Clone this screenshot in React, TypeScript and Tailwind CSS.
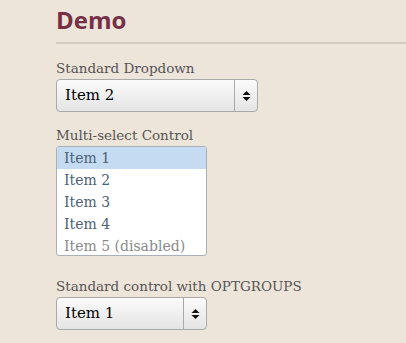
const Arrows = () => (
  <svg width="9" height="12" viewBox="0 0 9 12" className="block">
    <path d="M0.5 5 L4.5 1 L8.5 5 Z" fill="#111" />
    <path d="M0.5 7 L4.5 11 L8.5 7 Z" fill="#111" />
  </svg>
);

const Dropdown = ({ value, width }: { value: string; width: string }) => (
  <div
    className={`${width} h-[33px] flex items-stretch rounded-[4px] border border-[#a9a9a9] bg-gradient-to-b from-[#fbfbfb] to-[#e4e4e4] text-black`}
  >
    <div className="flex-1 flex items-center pl-[8px] text-[15px]">{value}</div>
    <div className="w-[23px] border-l border-[#a9a9a9] flex items-center justify-center">
      <Arrows />
    </div>
  </div>
);

const items = ['Item 1', 'Item 2', 'Item 3', 'Item 4', 'Item 5 (disabled)'];

export default function App() {
  return (
    <div className="min-h-[343px] bg-[#ede4da] pl-[56px] font-['DejaVu_Serif',serif] text-[#555]">
      <h1 className="pt-[5px] h-[42px] font-['Open_Sans',sans-serif] font-bold text-[24px] leading-[30px] text-[#763045]">
        Demo
      </h1>
      <div className="h-[2px] bg-[#d5cbc1]"></div>

      <div className="pt-[15px] text-[13.5px] leading-[18px]">Standard Dropdown</div>
      <div className="mt-[2px]">
        <Dropdown value="Item 2" width="w-[202px]" />
      </div>

      <div className="pt-[14px] text-[13.5px] leading-[18px]">Multi-select Control</div>
      <div className="mt-[2px] w-[151px] h-[110px] rounded-[3px] border border-[#aab0b8] bg-white overflow-hidden text-[14px]">
        {items.map((item, i) => (
          <div
            key={item}
            className={`h-[22px] flex items-center pl-[7px] ${
              i === 0 ? 'bg-[#c4dbf2] text-[#4b6378]' : i === 4 ? 'text-[#8a8a8a]' : 'text-[#4b6378]'
            }`}
          >
            {item}
          </div>
        ))}
      </div>

      <div className="pt-[21px] text-[13.5px] leading-[18px]">Standard control with OPTGROUPS</div>
      <div className="mt-[2px]">
        <Dropdown value="Item 1" width="w-[151px]" />
      </div>
    </div>
  );
}
